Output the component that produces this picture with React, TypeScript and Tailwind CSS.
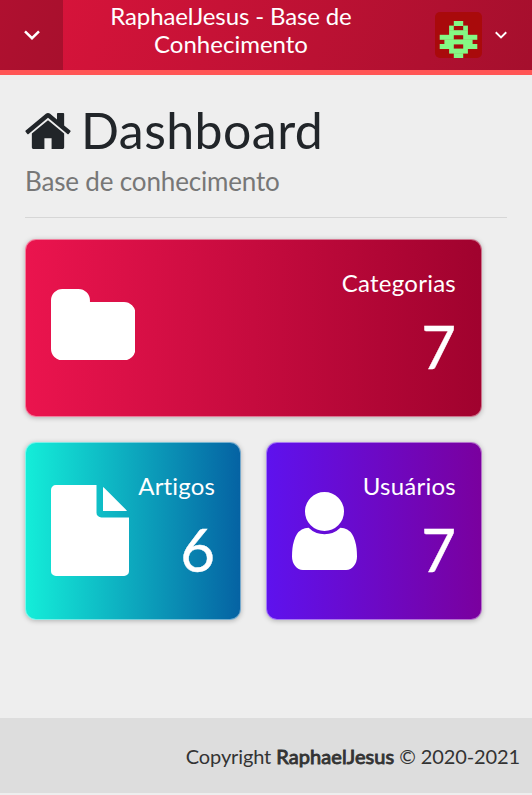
import type { ReactNode } from "react";

function Chevron({ className }: { className: string }) {
  return (
    <svg className={className} viewBox="0 0 16 10" fill="none" stroke="currentColor" strokeWidth="2.5">
      <path d="M1 1.3 8 8.2 15 1.3" />
    </svg>
  );
}

const avatarCells: [number, number, number][] = [
  [4, 0, 2], [3, 1, 1], [6, 1, 1], [3, 2, 4],
  [1, 3, 3], [6, 3, 3], [2, 4, 6], [1, 5, 3], [6, 5, 3],
  [3, 6, 4], [4, 7, 2],
];

function Avatar() {
  return (
    <svg className="h-[46px] w-[47px] rounded-[5px] bg-[#a90a0b]" viewBox="0 0 47 46">
      {avatarCells.map(([x, y, w]) => (
        <rect key={`${x}-${y}`} x={x * 4.7} y={9 + y * 4.6} width={w * 4.7} height={5} fill="#84f884" />
      ))}
    </svg>
  );
}

function StatCard({ className, label, labelClass, value, icon }: { className: string; label: string; labelClass: string; value: number; icon: ReactNode }) {
  return (
    <section className={`flex h-[178px] items-center justify-between rounded-[11px] border border-white/45 bg-origin-border px-[25px] text-white shadow-[0_1px_5px_rgba(0,0,0,0.25)] ${className}`}>
      {icon}
      <div className="flex h-full flex-col items-end pt-7">
        <h2 className={`text-2xl leading-[29px] ${labelClass}`}>{label}</h2>
        <p className="mt-[13px] text-[60px] leading-[72px] [-webkit-text-stroke:0.4px_white]">{value}</p>
      </div>
    </section>
  );
}

export default function App() {
  return (
    <div className="flex h-[795px] w-[532px] flex-col bg-[#eee] font-['Lato',sans-serif] text-[#212529] [font-variant-ligatures:none]">
      <header className="flex h-[75px] shrink-0 border-b-5 border-[#ff5555] bg-linear-110/srgb from-[#dc143c] to-[#a50f2d] text-white">
        <button className="flex w-[63px] items-center justify-center bg-linear-110/srgb from-[#b01030] to-[#a7102d]">
          <Chevron className="h-[10px] w-4" />
        </button>
        <h1 className="w-[336px] pt-[2px] text-center text-2xl leading-7 tracking-[-0.13px]">RaphaelJesus - Base de<br /><span className="tracking-normal">Conhecimento</span></h1>
        <div className="ml-9 flex items-center gap-[13px]">
          <Avatar />
          <Chevron className="h-2 w-3" />
        </div>
      </header>
      <main className="flex-1 px-[25px] pt-[25px]">
        <div className="h-[118px] border-b border-[#d6d6d6]">
          <h1 className="flex h-[62px] items-center text-[50px] leading-[62px] tracking-[0.45px]">
            <svg className="mr-[10px] h-9 w-[46px]" viewBox="76 253 1640 1283" fill="currentColor">
              <path d="M1472 992v480q0 26-19 45t-45 19h-384v-384h-256v384h-384q-26 0-45-19t-19-45v-480q0-1 .5-3t.5-3l575-474 575 474q1 2 1 6zm223-69l-62 74q-8 9-21 11h-3q-13 0-21-7l-692-577-692 577q-12 8-24 7-13-2-21-11l-62-74q-8-10-7-23.5t11-21.5l719-599q32-26 76-26t76 26l244 204v-195q0-14 9-23t23-9h192q14 0 23 9t9 23v408l219 182q10 8 11 21.5t-7 23.5z" />
            </svg>
            <span className="-mt-[2px]">Dashboard</span>
          </h1>
          <p className="text-[26px] leading-[38px] tracking-[-0.16px] text-[#777]">Base de conhecimento</p>
        </div>
        <div className="mt-[21px] grid w-[457px] grid-cols-[216px_216px] gap-[25px]">
          <StatCard
            className="col-span-2 bg-linear-to-r/srgb from-[#eb144e] to-[#a0022e]"
            label="Categorias"
            labelClass="tracking-[0.25px]"
            value={7}
            icon={
              <svg className="mt-[-7px] h-[71.4px] w-[84.4px]" viewBox="64 128 1664 1408" fill="currentColor">
                <path d="M1728 608v704q0 92-66 158t-158 66h-1216q-92 0-158-66t-66-158v-960q0-92 66-158t158-66h320q92 0 158 66t66 158v32h672q92 0 158 66t66 158z" />
              </svg>
            }
          />
          <StatCard
            className="bg-linear-to-r/srgb from-[#14eed9] to-[#0562a3]"
            label="Artigos"
            labelClass="tracking-[0.15px]"
            value={6}
            icon={
              <svg className="-mt-px h-[91px] w-[78px]" viewBox="128 0 1536 1792" fill="currentColor">
                <path d="M1152 512v-472q22 14 36 28l408 408q14 14 28 36h-472zm-128 32q0 40 28 68t68 28h544v1056q0 40-28 68t-68 28h-1344q-40 0-68-28t-28-68v-1600q0-40 28-68t68-28h800v544z" />
              </svg>
            }
          />
          <StatCard
            className="bg-linear-to-r/srgb from-[#5e12ee] to-[#7a009e]"
            label="Usuários"
            labelClass="tracking-[0.25px]"
            value={7}
            icon={
              <svg className="h-[78px] w-[65px]" viewBox="256 128 1280 1536" fill="currentColor">
                <path d="M1536 1399q0 109-62.5 187t-150.5 78h-854q-88 0-150.5-78t-62.5-187q0-85 8.5-160.5t31.5-152 58.5-131 94-89 134.5-34.5q131 128 313 128t313-128q76 0 134.5 34.5t94 89 58.5 131 31.5 152 8.5 160.5zm-256-887q0 159-112.5 271.5t-271.5 112.5-271.5-112.5-112.5-271.5 112.5-271.5 271.5-112.5 271.5 112.5 112.5 271.5z" />
              </svg>
            }
          />
        </div>
      </main>
      <footer className="mb-[2px] flex h-[75px] shrink-0 items-center justify-end bg-[#ddd] pr-3 text-[20px] tracking-[-0.12px] text-[#333]">
        <p>Copyright <strong className="font-normal tracking-[0.1px] [-webkit-text-stroke:0.9px_#333]">RaphaelJesus</strong> © 2020-2021</p>
      </footer>
    </div>
  );
}
